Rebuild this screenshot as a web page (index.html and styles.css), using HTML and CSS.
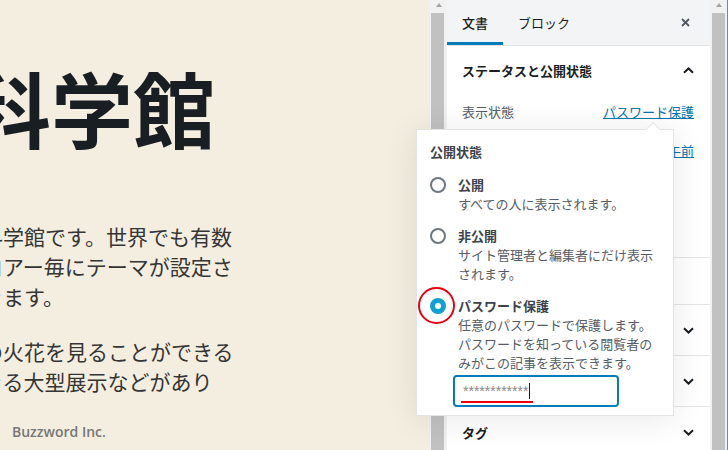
FILE: index.html
```html
<!DOCTYPE html>
<html lang="ja">
<head>
<meta charset="utf-8">
<title>科学館 - 編集</title>
<link rel="stylesheet" href="styles.css">
</head>
<body>
<div class="app">
  <main class="canvas">
    <div class="post">
      <h1 class="title">科学館</h1>
      <div class="body">
        <p><span class="line">科学館です。世界でも有数</span><span class="line">ロアー毎にテーマが設定さ</span><span class="line">きます。</span></p>
        <p><span class="line">の火花を見ることができる</span><span class="line">きる大型展示などがあり</span></p>
      </div>
    </div>
    <footer class="credit">Buzzword Inc.</footer>
  </main>

  <div class="scrollbar scrollbar-left"><span class="scroll-up"></span><span class="thumb"></span></div>

  <aside class="sidebar">
    <div class="tabs">
      <div class="tab active">文書</div>
      <div class="tab">ブロック</div>
      <div class="close"><svg width="9" height="9" viewBox="0 0 9 9"><path d="M1 1l7 7M8 1L1 8" stroke="#50575e" stroke-width="1.8" fill="none"/></svg></div>
    </div>
    <section class="panel status">
      <div class="panel-head"><span>ステータスと公開状態</span><svg width="11" height="7" viewBox="0 0 11 7"><path d="M1 5.8l4.5-4.3L10 5.8" fill="none" stroke="#191e23" stroke-width="2"/></svg></div>
      <div class="row"><span class="label">表示状態</span><a class="link">パスワード保護</a></div>
      <div class="row"><span class="label">公開</span><a class="link">2020年5月21日 10:04 午前</a></div>
    </section>
    <section class="panel trash">
      <div class="row"><span class="danger">ゴミ箱へ移動</span></div>
    </section>
    <section class="panel fold">
      <div class="panel-head"><span>パーマリンク</span><svg width="11" height="7" viewBox="0 0 11 7"><path d="M1 1.2l4.5 4.3L10 1.2" fill="none" stroke="#191e23" stroke-width="2"/></svg></div>
    </section>
    <section class="panel fold">
      <div class="panel-head"><span>カテゴリー</span><svg width="11" height="7" viewBox="0 0 11 7"><path d="M1 1.2l4.5 4.3L10 1.2" fill="none" stroke="#191e23" stroke-width="2"/></svg></div>
    </section>
    <section class="panel fold">
      <div class="panel-head"><span>タグ</span><svg width="11" height="7" viewBox="0 0 11 7"><path d="M1 1.2l4.5 4.3L10 1.2" fill="none" stroke="#191e23" stroke-width="2"/></svg></div>
    </section>
  </aside>

  <div class="scrollbar scrollbar-right"><span class="scroll-up"></span><span class="thumb"></span></div>
  <div class="edge"></div>

  <div class="popover">
    <span class="pop-arrow"></span>
    <div class="legend">公開状態</div>
    <div class="option">
      <span class="radio"></span>
      <div class="opt-text"><div class="opt-title">公開</div><div class="opt-desc">すべての人に表示されます。</div></div>
    </div>
    <div class="option">
      <span class="radio"></span>
      <div class="opt-text"><div class="opt-title">非公開</div><div class="opt-desc">サイト管理者と編集者にだけ表示されます。</div></div>
    </div>
    <div class="option">
      <span class="radio on"></span>
      <div class="opt-text">
        <div class="opt-title">パスワード保護</div>
        <div class="opt-desc">任意のパスワードで保護します。パスワードを知っている閲覧者のみがこの記事を表示できます。</div>
        <div class="pw"><span class="pw-text">************</span><span class="caret"></span><span class="mark-line"></span></div>
      </div>
    </div>
    <span class="mark-circle"></span>
  </div>
</div>
</body>
</html>
```

FILE: styles.css
```css
* { box-sizing: border-box; }
html, body { margin: 0; padding: 0; }
body {
  width: 728px;
  height: 450px;
  overflow: hidden;
  font-family: "Noto Sans CJK JP", sans-serif;
  color: #191e23;
}
.app { position: relative; display: flex; height: 450px; }

/* editor canvas */
.canvas {
  width: 430px;
  flex: none;
  background: #f4eee0;
  overflow: hidden;
  display: flex;
  flex-direction: column;
}
.post { padding-top: 57px; }
.title {
  margin: 0 0 0 -31px;
  font-size: 82px;
  line-height: 100px;
  font-weight: 700;
  color: #191e23;
  white-space: nowrap;
}
.body {
  margin: 64px 0 0 -18px;
  font-size: 21px;
  line-height: 30px;
  color: #353535;
}
.body p { margin: 0 0 25px; }
.line { display: block; white-space: nowrap; }
.credit {
  margin-top: auto;
  padding: 0 0 9px 12px;
  font: 600 14px/18px "Open Sans", sans-serif;
  color: #777;
}

/* scrollbars */
.scrollbar {
  width: 17px;
  flex: none;
  background: #f1f1f1;
  display: flex;
  flex-direction: column;
  align-items: center;
}
.scroll-up {
  width: 0; height: 0;
  margin-top: 3px;
  border-left: 3.5px solid transparent;
  border-right: 3.5px solid transparent;
  border-bottom: 4px solid #a3a3a3;
}
.thumb { flex: 1; width: 13px; margin-top: 6px; background: #c1c1c1; }
.scrollbar-left .thumb { margin-right: 2px; }
.edge { width: 1px; flex: none; background: #4a90d9; }

/* sidebar */
.sidebar {
  width: 263px;
  flex: none;
  background: #fff;
  display: flex;
  flex-direction: column;
  overflow: hidden;
}
.tabs {
  display: flex;
  height: 46px;
  flex: none;
  background: #f3f4f5;
  border-bottom: 1px solid #e2e4e7;
}
.tab {
  padding: 0 15px;
  display: flex;
  align-items: center;
  font-size: 13px;
  color: #191e23;
}
.tab.active { box-shadow: inset 0 -3px 0 #007cba; font-weight: 500; }
.close { margin-left: auto; padding-right: 20px; display: flex; align-items: center; }

.panel { border-bottom: 1px solid #e2e4e7; flex: none; }
.panel-head {
  height: 50px;
  display: flex;
  align-items: center;
  justify-content: space-between;
  padding: 0 16px 0 15px;
  font-size: 13px;
  font-weight: 600;
}
.status { height: 212px; }
.status .panel-head { height: 48px; }
.trash { height: 47px; }
.fold { height: 51px; }
.row {
  height: 34px;
  margin-bottom: 5px;
  display: flex;
  align-items: center;
  justify-content: space-between;
  padding: 0 16px 0 15px;
  font-size: 13px;
}
.trash .row { height: 46px; margin: 0; }
.label { color: #555d66; }
.link { color: #0073aa; text-decoration: underline; white-space: nowrap; }
.danger { color: #a00; }

/* popover */
.popover {
  position: absolute;
  left: 416px;
  top: 129px;
  width: 258px;
  background: #fff;
  border: 1px solid #e2e4e7;
  box-shadow: 0 3px 30px rgba(25, 30, 35, 0.1);
  padding: 12px 13px 8px 13px;
}
.pop-arrow {
  position: absolute;
  top: -6px;
  left: 231px;
  width: 10px;
  height: 10px;
  background: #fff;
  border-top: 1px solid #e2e4e7;
  border-left: 1px solid #e2e4e7;
  transform: rotate(45deg);
}
.legend {
  font-size: 13px;
  line-height: 19px;
  font-weight: 600;
  color: #3c434a;
  margin-bottom: 14px;
}
.option { display: flex; gap: 12px; margin-bottom: 13px; }
.option:last-of-type { margin-bottom: 0; }
.radio {
  flex: none;
  width: 16px;
  height: 16px;
  margin-top: 1.5px;
  border: 2px solid #6c7781;
  border-radius: 50%;
  display: flex;
  align-items: center;
  justify-content: center;
}
.radio.on { border-color: #11a0d2; background: #11a0d2; }
.radio.on::after {
  content: "";
  width: 6px;
  height: 6px;
  border-radius: 50%;
  background: #fff;
}
.opt-text { font-size: 13px; line-height: 19px; }
.opt-title { font-weight: 600; color: #3c434a; }
.opt-desc { color: #555d66; }
.pw {
  position: relative;
  margin: 3px 0 0 -5px;
  width: 166px;
  height: 32px;
  border: 2px solid #007cba;
  border-radius: 4px;
  display: flex;
  align-items: center;
  padding-left: 8px;
  font: 14px "Liberation Sans", sans-serif;
  color: #888;
}
.caret { width: 1px; height: 16px; background: #191e23; margin-left: 1px; }
.mark-line {
  position: absolute;
  left: 6px;
  top: 24px;
  width: 72px;
  height: 2px;
  background: #e60012;
}
.mark-circle {
  position: absolute;
  left: 1px;
  top: 157px;
  width: 37px;
  height: 37px;
  border: 2px solid #e60012;
  border-radius: 50%;
}
```
